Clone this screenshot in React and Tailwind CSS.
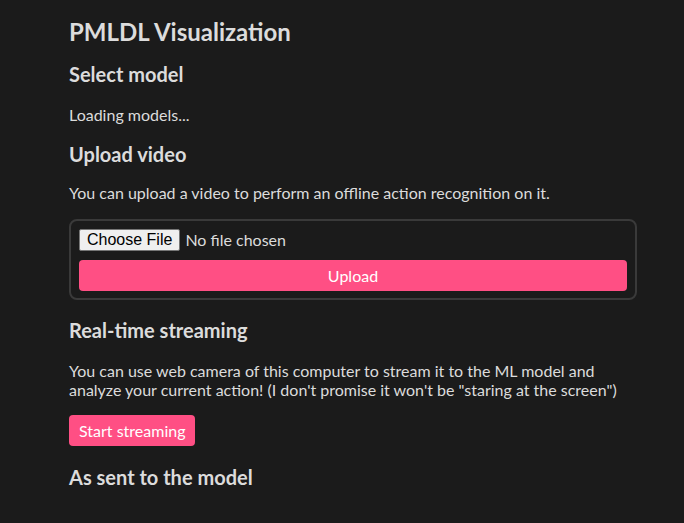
import React from 'react';

export default function App() {
    return (
        <div className="min-h-[523px] bg-[#1b1b1b] text-[#dcdcdc] font-['Lato',sans-serif]">
            <div className="ml-[69px] w-[568px] pt-[18px] flex flex-col">
                <h1 className="text-[24px] leading-[28px] font-bold">PMLDL Visualization</h1>
                <h2 className="mt-[16px] text-[20px] leading-[24px] font-bold">Select model</h2>
                <p className="mt-[19px] text-[16px] leading-[20px]">Loading models...</p>
                <h2 className="mt-[17px] text-[20px] leading-[24px] font-bold">Upload video</h2>
                <p className="mt-[17px] text-[16px] leading-[20px]">
                    You can upload a video to perform an offline action recognition on it.
                </p>
                <div className="mt-[16px] h-[81px] border-2 border-[#3a3a3a] rounded-[8px] px-[8px] pt-[8px] flex flex-col gap-[9px]">
                    <div className="flex items-center h-[22px]">
                        <span className="h-[22px] px-[7px] flex items-center bg-[#efefef] border border-[#767676] rounded-[2px] text-black text-[16px] font-['Liberation_Sans',sans-serif]">
                            Choose File
                        </span>
                        <span className="ml-[5px] text-[16px]">No file chosen</span>
                    </div>
                    <button className="h-[31px] w-full bg-[#ff4f84] rounded-[4px] text-white text-[16px]">
                        Upload
                    </button>
                </div>
                <h2 className="mt-[18px] text-[20px] leading-[24px] font-bold">Real-time streaming</h2>
                <p className="mt-[19px] text-[16px] leading-[19px]">
                    You can use web camera of this computer to stream it to the ML model and analyze your current action! (I don't promise it won't be "staring at the screen")
                </p>
                <div className="mt-[16px]">
                    <button className="h-[31px] px-[10px] bg-[#ff4f84] rounded-[4px] text-white text-[16px]">
                        Start streaming
                    </button>
                </div>
                <h2 className="mt-[19px] text-[20px] leading-[24px] font-bold">As sent to the model</h2>
            </div>
        </div>
    );
}
